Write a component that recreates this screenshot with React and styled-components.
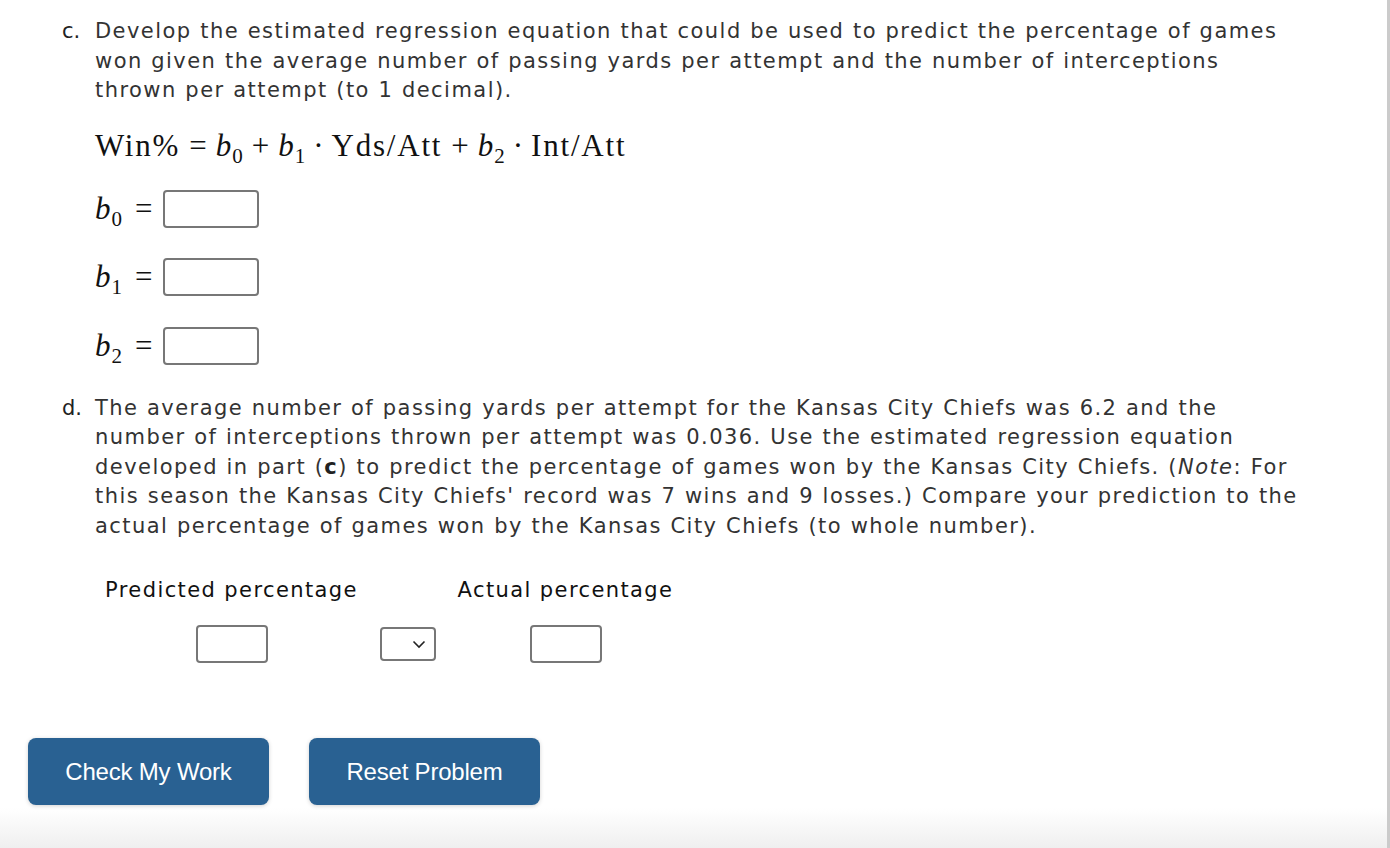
import React from "react";
import styled, { createGlobalStyle } from "styled-components";

const GlobalStyle = createGlobalStyle`
  html, body {
    margin: 0;
    padding: 0;
    background: #fff;
  }
  body {
    font-family: "DejaVu Sans", Verdana, sans-serif;
    color: #333;
  }
`;

const Page = styled.div`
  box-sizing: border-box;
  min-height: 848px;
  padding: 17px 0 0 62px;
  border-right: 3px solid #cbcbcb;
  background: linear-gradient(to bottom, #fff 0, #fff 808px, #efefef 848px);
`;

const Part = styled.div`
  display: flex;
  margin-top: ${(p) => p.$top || 0}px;
`;

const PartLetter = styled.div`
  width: 33px;
  flex: none;
  font-size: 21px;
  line-height: 29.5px;
  color: #222;
`;

const PartBody = styled.div`
  flex: 1;
`;

const Prose = styled.p`
  margin: 0;
  font-size: 21px;
  line-height: 29.5px;
  letter-spacing: 1.45px;
  word-spacing: 0.5px;
`;

const ProseLine = styled.span`
  display: block;
  white-space: nowrap;
`;

const MathLine = styled.div`
  font-family: "Liberation Serif", "DejaVu Serif", serif;
  font-size: 31px;
  line-height: 36px;
  letter-spacing: 1.8px;
  color: #111;
  margin-top: ${(p) => p.$top || 0}px;
  white-space: nowrap;
`;

const Var = styled.i`
  font-style: italic;
  letter-spacing: 0;
`;

const Sub = styled.sub`
  font-size: 21px;
  font-style: normal;
  vertical-align: -7px;
  line-height: 0;
  letter-spacing: 0;
  margin-left: 1px;
`;

const Op = styled.span`
  margin: 0 ${(p) => p.$space || 9}px;
  letter-spacing: 0;
`;

const CoefRow = styled.div`
  display: flex;
  align-items: center;
  height: 38px;
  margin-top: ${(p) => p.$top}px;
  font-family: "Liberation Serif", "DejaVu Serif", serif;
  font-size: 31px;
  color: #111;
`;

const CoefName = styled.span`
  width: 40px;
`;

const Equals = styled.span`
  width: 28px;
`;

const Input = styled.div`
  box-sizing: border-box;
  width: ${(p) => p.$w}px;
  height: 38px;
  border: 2px solid #777;
  border-radius: 4px;
  background: #fff;
`;

const Select = styled.div`
  box-sizing: border-box;
  width: 56px;
  height: 34px;
  border: 2px solid #777;
  border-radius: 4px;
  background: #fff;
  display: flex;
  align-items: center;
  justify-content: flex-end;
  padding-right: 8px;
`;

const Strong = styled.b`
  font-weight: bold;
  color: #222;
`;

const Compare = styled.div`
  display: grid;
  grid-template-columns: 253px 99px 217px;
  margin: 34px 0 0 10px;
  row-gap: 20px;
`;

const CompareLabel = styled.div`
  font-size: 21px;
  line-height: 30px;
  letter-spacing: 1.4px;
  color: #111;
  text-align: center;
  white-space: nowrap;
`;

const Cell = styled.div`
  display: flex;
  justify-content: center;
  align-items: center;
  height: 38px;
`;

const Buttons = styled.div`
  display: flex;
  gap: 40px;
  margin: 75px 0 0 -34px;
`;

const Button = styled.button`
  box-sizing: border-box;
  width: ${(p) => p.$w}px;
  height: 67px;
  border: none;
  border-radius: 8px;
  background: #296192;
  color: #fff;
  font-family: "Liberation Sans", Arial, sans-serif;
  font-size: 24px;
  letter-spacing: -0.2px;
  box-shadow: 0 1px 4px rgba(0, 0, 0, 0.18);
  cursor: pointer;
`;

const Chevron = () => (
  <svg width="14" height="9" viewBox="0 0 14 9" fill="none">
    <path d="M1.5 1.5 L7 7 L12.5 1.5" stroke="#222" strokeWidth="1.6" />
  </svg>
);

const Coef = ({ n, top }) => (
  <CoefRow $top={top}>
    <CoefName>
      <Var>b</Var>
      <Sub>{n}</Sub>
    </CoefName>
    <Equals>=</Equals>
    <Input $w={96} />
  </CoefRow>
);

export default function App() {
  return (
    <>
      <GlobalStyle />
      <Page>
        <Part>
          <PartLetter>c.</PartLetter>
          <PartBody>
            <Prose>
              <ProseLine>
                Develop the estimated regression equation that could be used to
                predict the percentage of games
              </ProseLine>
              <ProseLine>
                won given the average number of passing yards per attempt and
                the number of interceptions
              </ProseLine>
              <ProseLine>thrown per attempt (to 1 decimal).</ProseLine>
            </Prose>
            <MathLine $top={22}>
              Win%
              <Op>=</Op>
              <Var>b</Var>
              <Sub>0</Sub>
              <Op>+</Op>
              <Var>b</Var>
              <Sub>1</Sub>
              <Op $space={8}>·</Op>
              Yds/Att
              <Op>+</Op>
              <Var>b</Var>
              <Sub>2</Sub>
              <Op $space={8}>·</Op>
              Int/Att
            </MathLine>
            <Coef n="0" top={26} />
            <Coef n="1" top={30} />
            <Coef n="2" top={31} />
          </PartBody>
        </Part>

        <Part $top={29}>
          <PartLetter>d.</PartLetter>
          <PartBody>
            <Prose>
              <ProseLine>
                The average number of passing yards per attempt for the Kansas
                City Chiefs was 6.2 and the
              </ProseLine>
              <ProseLine>
                number of interceptions thrown per attempt was 0.036. Use the
                estimated regression equation
              </ProseLine>
              <ProseLine>
                developed in part (<Strong>c</Strong>) to predict the percentage
                of games won by the Kansas City Chiefs. (<i>Note</i>: For
              </ProseLine>
              <ProseLine>
                this season the Kansas City Chiefs' record was 7 wins and 9
                losses.) Compare your prediction to the
              </ProseLine>
              <ProseLine>
                actual percentage of games won by the Kansas City Chiefs (to
                whole number).
              </ProseLine>
            </Prose>
            <Compare>
              <CompareLabel>Predicted percentage</CompareLabel>
              <div />
              <CompareLabel>Actual percentage</CompareLabel>
              <Cell>
                <Input $w={72} />
              </Cell>
              <Cell>
                <Select>
                  <Chevron />
                </Select>
              </Cell>
              <Cell>
                <Input $w={72} />
              </Cell>
            </Compare>
          </PartBody>
        </Part>

        <Buttons>
          <Button $w={241}>Check My Work</Button>
          <Button $w={231}>Reset Problem</Button>
        </Buttons>
      </Page>
    </>
  );
}
